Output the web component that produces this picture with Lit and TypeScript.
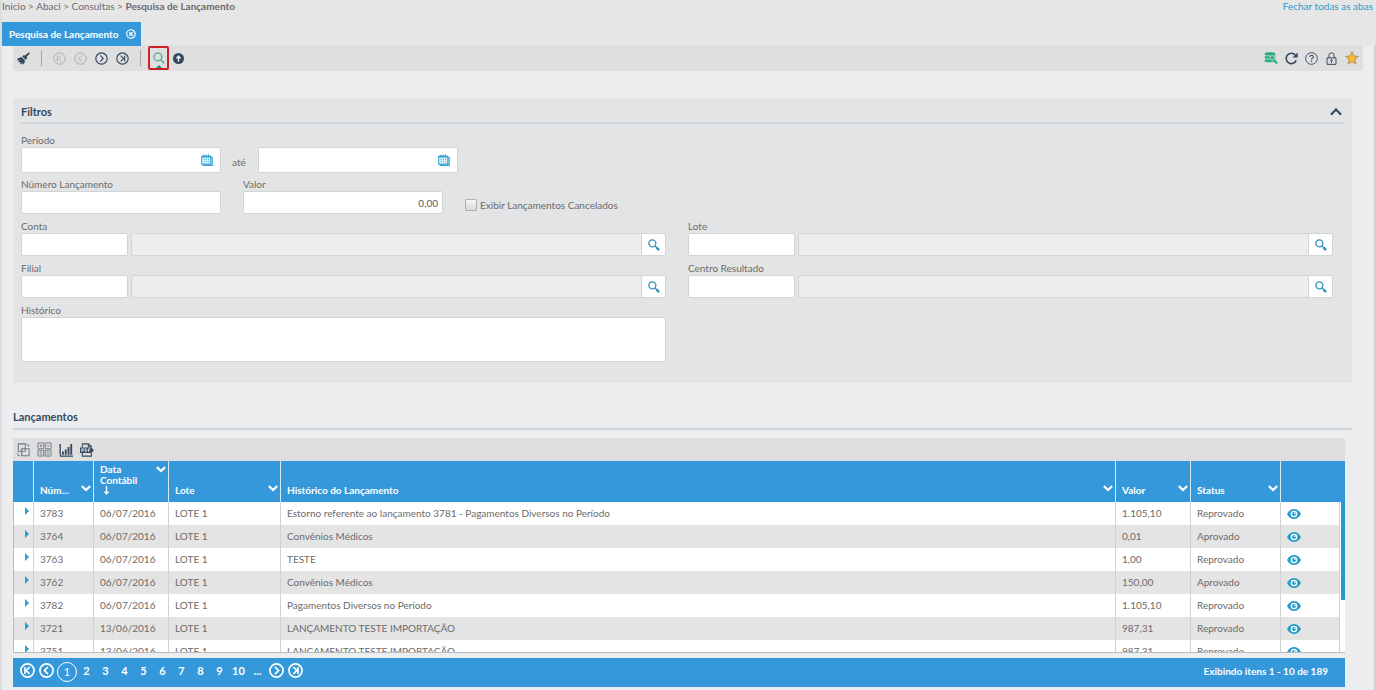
import { LitElement, html, css, svg } from "lit";
import { customElement, state } from "lit/decorators.js";
import { classMap } from "lit/directives/class-map.js";

type Row = [string, string, string, string, string];

const ROWS: Row[] = [
  ["3783", "06/07/2016", "Estorno referente ao lançamento 3781 - Pagamentos Diversos no Período", "1.105,10", "Reprovado"],
  ["3764", "06/07/2016", "Convênios Médicos", "0,01", "Aprovado"],
  ["3763", "06/07/2016", "TESTE", "1,00", "Reprovado"],
  ["3762", "06/07/2016", "Convênios Médicos", "150,00", "Aprovado"],
  ["3782", "06/07/2016", "Pagamentos Diversos no Período", "1.105,10", "Reprovado"],
  ["3721", "13/06/2016", "LANÇAMENTO TESTE IMPORTAÇÃO", "987,31", "Reprovado"],
  ["3751", "13/06/2016", "LANÇAMENTO TESTE IMPORTAÇÃO", "987,31", "Reprovado"],
];

const line = (size: number, width: number, body: unknown, box = 16) => html`<svg
  width=${size} height=${size} viewBox="0 0 ${box} ${box}" fill="none"
  stroke="currentColor" stroke-width=${width} aria-hidden="true">${body}</svg>`;

const first = svg`<circle cx="8" cy="8" r="7"/><path d="M5.3 4.4v7.2M10.2 4.4 6.6 8l3.6 3.6"/>`;
const prev = svg`<circle cx="8" cy="8" r="7"/><path d="M9.6 4.2 5.8 8l3.8 3.8"/>`;
const next = svg`<circle cx="8" cy="8" r="7"/><path d="M6.4 4.2 10.2 8l-3.8 3.8"/>`;
const last = svg`<circle cx="8" cy="8" r="7"/><path d="M10.7 4.4v7.2M5.8 4.4 9.4 8l-3.6 3.6"/>`;

const closeIcon = line(10, 1.8, svg`<circle cx="8" cy="8" r="6.8"/><path d="m5.2 5.2 5.6 5.6m0-5.6-5.6 5.6" stroke-width="2.2"/>`);
const broomIcon = line(13, 1, svg`<path fill="currentColor" stroke="none" d="M14.6.4 16 1.6l-4.3 4.6.9 1.4-2 1.9-4.2-4 2-1.9 1.4.8zM5.6 6.2l4.3 4.2-1 3.6-2.2 1.6.1-2.5-1.6 1.6-1.7-.5 1.4-2.5-2.3 1.3L1.2 11l2.6-1.4L.4 10 .2 8.2z"/>`);
const searchIcon = line(12, 1.5, svg`<circle cx="6.6" cy="6.6" r="5.2"/><path d="m10.6 10.6 4.4 4.4"/>`);
const upIcon = line(11, 2, svg`<circle cx="8" cy="8" r="8" fill="currentColor" stroke="none"/><path stroke="#fff" d="M8 12.4V5M4.8 7.8 8 4.6l3.2 3.2"/>`);
const dbIcon = line(14, 1, svg`<path fill="currentColor" stroke="none" d="M1 2.200C3 1 11 1 13 2.200v8l2.800 3.200-1.400 1.600-3.200-2.600C8 13.200 3 13.200 1 12.200z"/><path stroke="#dfdfdf" stroke-width=".9" d="M1 4.900c2.500 1 4.500.9 6.500.4M1 8.600c1.500.7 3 .9 5 .8M11.500 4.700l1.500-.4"/><circle cx="9.400" cy="7.900" r="2.600" stroke="#dfdfdf" stroke-width=".9"/>`);
const reloadIcon = line(13, 1.9, svg`<path d="M13.800 10.300A6.400 6.400 0 1 1 12.800 3.800"/><path fill="currentColor" stroke="none" d="M15.600.6v6.200H9.400z"/>`);
const helpIcon = line(13, 1.1, svg`<circle cx="8" cy="8" r="7.200"/><path stroke-width="1.300" d="M5.900 6.300C5.900 3.300 10.300 3.400 10.200 6.100 10.100 7.600 8 7.800 8 9.600M8 10.900v1.500"/>`);
const lockIcon = line(13, 1.2, svg`<path d="M2.500 7.200h11v8h-11zM4.800 7V4.200a3.200 3.200 0 0 1 6.400 0V7"/><circle cx="8" cy="10.300" r="1"/><path d="M8 11v2.400"/>`);
const starIcon = line(14, 1, svg`<path fill="#f7b736" stroke="#a8905c" d="m8 .9 2.100 4.800 5.200.5-3.900 3.500 1.100 5.200L8 12.200l-4.500 2.700 1.100-5.200L.7 6.200l5.200-.5z"/>`);
const calendarIcon = line(12, 1.4, svg`<path fill="#c9ecf8" d="M3 4.600h12v10.600H3z"/><path fill="#eefaff" d="M1 3h12v10.500H1z"/><path stroke-width="2.200" d="M1 3.600h12"/><path d="M4 .6v3M7 .6v3M10 .6v3"/><path stroke-width="1.200" stroke-dasharray="2 1" d="M4.200 6v5M7 6v5M9.800 6v5"/>`);
const lensIcon = line(12, 1.700, svg`<circle cx="5.800" cy="5.800" r="4.700"/><path d="m9.200 9.200 2 2"/><path stroke-width="3" d="m11 11 3.800 3.800"/>`);
const collapseIcon = line(12, 2.800, svg`<path d="m1.200 11.800 6.800-7 6.800 7"/>`);
const chevronIcon = line(10, 3.400, svg`<path d="m1.400 5 6.600 6.200L14.600 5"/>`);
const sortIcon = line(9, 2.600, svg`<path d="M8 0v13M4.400 10 8 14l3.600-4"/>`);
const eyeIcon = html`<svg width="14" height="10" viewBox="0 0 14 10" aria-hidden="true"><path fill="currentColor" d="M0 5C3.300-1.600 10.700-1.600 14 5 10.700 11.600 3.300 11.600 0 5z"/><circle cx="7" cy="5" r="3.300" fill="#fff"/><circle cx="7" cy="5" r="2" fill="currentColor"/><circle cx="7.800" cy="4.200" r=".8" fill="#fff"/></svg>`;
const groupIcon = line(14, 1.2, svg`<path d="M2.600 1h8v8.500h-8zM6.500 6.500H15v8H6.500z"/><path stroke-dasharray="2 1.400" d="M12 1.600h2.600v3M2 11v3.400h3"/>`);
const columnsIcon = line(15, 1, svg`<path d="M1 1h6.200v6.200H1zM8.800 1H15v6.200H8.800zM1 8.800h6.200V15H1zM8.800 8.800H15V15H8.800zM2.800 4.100h2.600M4.100 2.800v2.600M10.600 4.100h2.600M2.800 10.900h2.600M2.800 13h2.600M10.600 10.900h2.600M10.600 13h2.600"/>`);
const chartIcon = line(14, 1.200, svg`<path d="M1.500 1v14H16M0 2.500h1.500M0 5.500h1.500M0 8.500h1.500M0 11.500h1.500"/><path stroke-width="2.100" d="M4.500 13.500V9.800M7.700 13.500V7.300M10.900 13.500V4.500M14 13.500V1"/>`);
const pdfIcon = html`<svg width="14" height="14" viewBox="0 0 16 16" fill="none" stroke="currentColor" stroke-width="1.200" aria-hidden="true"><path d="M2.600 5V1h7l3.400 3v1M2.600 11.500V15h10.400v-3.500M9.500 1v3.300H13"/><path fill="currentColor" stroke="none" d="M0 5h13l3 3.200-3 3.300H0z"/><path stroke="#dfdfdf" stroke-width="1" d="M2 10.300V6.600h1.800v1.900H2M5.700 6.600v3.200h1.200l.8-.8V7.300l-.7-.7zM9.600 10.300V6.600h2.200M9.600 8.300h1.800"/></svg>`;

@customElement("app-root")
export class AppRoot extends LitElement {
  @state() private open = true;
  @state() private page = 1;

  static styles = css`
    :host {
      display: block;
      min-height: 100vh;
      box-sizing: border-box;
      background: #e6e6e6;
      border-left: 2px solid #dcdddd;
      color: #6b6b6b;
      font: 10px/12px Lato, "Open Sans", sans-serif;
    }
    * { box-sizing: border-box; }
    svg { display: block; flex: none; }
    button {
      display: inline-flex;
      align-items: center;
      justify-content: center;
      padding: 0;
      border: 0;
      background: none;
      color: inherit;
      font: inherit;
      cursor: pointer;
    }
    .top {
      display: flex;
      justify-content: space-between;
      height: 22px;
      padding-right: 3px;
    }
    .crumbs a { color: inherit; text-decoration: none; }
    .close-all { color: #2d9bcb; text-decoration: none; }
    .tabs { display: flex; height: 23px; }
    .tab {
      display: flex;
      align-items: center;
      gap: 8px;
      height: 24px;
      padding: 0 5px 0 7px;
      background: #3498db;
      color: #fff;
      font-weight: 700;
      z-index: 1;
    }
    .page {
      min-height: calc(100vh - 45px);
      padding: 0 11px 3px;
      background: #ecedee;
      border-right: 2px solid #cfd0d0;
    }
    .toolbar {
      display: flex;
      align-items: center;
      gap: 8px;
      height: 26px;
      padding: 0 4px;
      background: #dfdfdf;
      color: #34495e;
    }
    .toolbar button:disabled { color: #a8adb2; cursor: default; }
    .sep { width: 1px; height: 16px; margin: 0 3px; background: #a4a6a8; }
    .found {
      position: relative;
      width: 21px;
      height: 24px;
      margin: 0 -4px;
      border: 2px solid #cc2127;
      border-radius: 2px;
      color: #35a37f;
    }
    .found::after {
      content: "";
      position: absolute;
      bottom: 0;
      border: 3px solid transparent;
      border-top: 0;
      border-bottom-color: #2b8d70;
    }
    .tools { display: flex; align-items: center; gap: 7px; margin-left: auto; }
    .green { color: #27ae85; }
    .panel {
      margin: 27px 11px 0 0;
      padding: 5px 8px 0;
      background: #e3e4e5;
    }
    .panel.open { padding-bottom: 21px; }
    .head {
      display: flex;
      align-items: center;
      justify-content: space-between;
      height: 21px;
      padding-bottom: 2px;
      border-bottom: 2px solid #d2d6d9;
    }
    h2 {
      margin: 0;
      color: #34495e;
      font-size: 11px;
      line-height: 16px;
      font-weight: 700;
    }
    .head button { color: #34495e; width: 16px; height: 16px; }
    .fields { padding: 10px 11px 0 0; }
    .line { display: flex; align-items: flex-end; }
    .field { display: flex; flex-direction: column; }
    .field > label { height: 13px; }
    .narrow { width: 200px; }
    input[type="text"], textarea {
      display: block;
      width: 100%;
      height: 23px;
      margin: 0;
      padding: 0 4px;
      border: 1px solid #d2d4d6;
      border-radius: 2px;
      background: #fff;
      color: #5c5c5c;
      font: 10px/14px Lato, "Open Sans", sans-serif;
      outline: 0;
    }
    input[readonly] { background: #ededed; border-radius: 2px 0 0 2px; }
    textarea { height: 45px; resize: none; }
    .date { position: relative; width: 200px; }
    .date input[type="text"] { height: 26px; padding-right: 24px; }
    .date button {
      position: absolute;
      top: 6px;
      right: 7px;
      width: 14px;
      height: 14px;
      color: #2ba0d2;
    }
    .until { width: 37px; padding: 0 0 5px 11px; }
    .second { margin-top: 5px; gap: 22px; }
    .right { text-align: right; }
    .check { display: flex; align-items: center; gap: 3px; height: 18px; }
    .check input {
      appearance: none;
      width: 12px;
      height: 12px;
      margin: 0;
      border: 1px solid #adb0b2;
      border-radius: 1px;
      background: linear-gradient(#f4f4f4, #d9dadb);
    }
    .check input:checked { background: #3498db; }
    .lookups {
      display: grid;
      grid-template-columns: 1fr 1fr;
      gap: 6px 22px;
      margin-top: 6px;
    }
    .lookup { display: flex; }
    .lookup .code { width: 107px; margin-right: 3px; flex: none; }
    .lookup .desc { flex: 1; min-width: 0; }
    .lookup button {
      width: 25px;
      height: 23px;
      margin-left: -1px;
      border: 1px solid #d2d4d6;
      border-radius: 0 2px 2px 0;
      background: #fff;
      color: #2b93b8;
      flex: none;
    }
    .section {
      margin: 26px 11px 8px 0;
      padding-bottom: 3px;
      border-bottom: 2px solid #d0d3d6;
    }
    .grid { margin-right: 18px; }
    .gridbar {
      display: flex;
      align-items: center;
      gap: 7px;
      height: 23px;
      padding: 0 3px;
      background: #dfdfdf;
      color: #34495e;
    }
    .soft { color: #6d7b88; }
    .frame { position: relative; }
    .scroll {
      height: 192px;
      overflow-y: auto;
      scrollbar-width: none;
      border-bottom: 1px solid #b9bcbe;
      background: #fff;
    }
    .thumb {
      position: absolute;
      top: 41px;
      right: 0;
      width: 4px;
      height: 98px;
      background: #209fc4;
    }
    table {
      width: 100%;
      table-layout: fixed;
      border-collapse: separate;
      border-spacing: 0;
    }
    .c20 { width: 21px; }
    .c60 { width: 60px; }
    .c75 { width: 75px; }
    .c112 { width: 112px; }
    .c90 { width: 90px; }
    .c59 { width: 59px; }
    .c5 { width: 5px; }
    th {
      position: sticky;
      top: 0;
      z-index: 1;
      height: 41px;
      padding: 3px 2px 6px 6px;
      background: #3498db;
      border-right: 1px solid #d6eaf8;
      color: #fff;
      font-weight: 700;
      line-height: 11px;
      text-align: left;
      vertical-align: bottom;
    }
    th:last-child { border-right: 0; }
    .cap { display: flex; align-items: flex-end; justify-content: space-between; }
    .cap button { padding-bottom: 3px; }
    .cap.tall { align-items: flex-start; }
    .cap.tall button { padding: 0; }
    .sort { padding-left: 2px; height: 10px; }
    td {
      height: 23px;
      padding: 0 6px 1px;
      border-right: 1px solid #cfd1d2;
      white-space: nowrap;
      overflow: hidden;
      text-overflow: ellipsis;
    }
    td:first-child { padding: 0 0 5px 11px; border-left: 1px solid #b9bcbe; text-overflow: clip; }
    td:last-child { padding: 0; border-right: 0; background: #fff; }
    tr:nth-child(even) td:not(:last-child) { background: #e4e4e4; }
    .expand { width: 4px; height: 8px; }
    .expand::before {
      content: "";
      border: 4px solid transparent;
      border-left-color: #2b9fd0;
      border-right: 0;
    }
    .view { color: #249fcb; vertical-align: middle; }
    .pager {
      display: flex;
      align-items: center;
      justify-content: space-between;
      height: 29px;
      margin-top: 5px;
      padding: 0 17px 4px 5px;
      background: #3498db;
      color: #fff;
      font-weight: 700;
    }
    .pages { display: flex; align-items: center; }
    .pages button { width: 19px; height: 20px; font-size: 11px; }
    .pages .current {
      width: 20px;
      border: 1px solid #fff;
      border-radius: 50%;
      font-weight: 400;
      margin: 2px 0 0 1px;
    }
  `;

  private lookup(id: string, label: string) {
    return html`<div class="field">
      <label for=${id}>${label}</label>
      <div class="lookup">
        <div class="code"><input id=${id} type="text" /></div>
        <div class="desc"><input type="text" readonly aria-label="Descrição ${label}" /></div>
        <button aria-label="Pesquisar ${label}">${lensIcon}</button>
      </div>
    </div>`;
  }

  private date(id: string, label: string) {
    return html`<div class="date">
      <input id=${id} type="text" aria-label=${label} />
      <button aria-label="Abrir calendário">${calendarIcon}</button>
    </div>`;
  }

  private head(text: string) {
    return html`<th><div class="cap"><span>${text}</span><button aria-label="Menu ${text}">${chevronIcon}</button></div></th>`;
  }

  render() {
    return html`
      <header class="top">
        <nav class="crumbs"><a href="#">Início</a> &gt; <a href="#">Abaci</a> &gt; <a href="#">Consultas</a> &gt; <b>Pesquisa de Lançamento</b></nav>
        <a class="close-all" href="#">Fechar todas as abas</a>
      </header>
      <div class="tabs">
        <div class="tab">Pesquisa de Lançamento<button aria-label="Fechar aba">${closeIcon}</button></div>
      </div>
      <main class="page">
        <div class="toolbar">
          <button aria-label="Limpar">${broomIcon}</button>
          <span class="sep"></span>
          <button disabled aria-label="Primeiro">${line(13, 1.2, first)}</button>
          <button disabled aria-label="Anterior">${line(13, 1.2, prev)}</button>
          <button aria-label="Próximo">${line(13, 1.4, next)}</button>
          <button aria-label="Último">${line(13, 1.4, last)}</button>
          <span class="sep"></span>
          <button class="found" aria-label="Pesquisar">${searchIcon}</button>
          <button aria-label="Subir">${upIcon}</button>
          <div class="tools">
            <button class="green" aria-label="Consultar dados">${dbIcon}</button>
            <button aria-label="Atualizar">${reloadIcon}</button>
            <button aria-label="Ajuda">${helpIcon}</button>
            <button aria-label="Bloquear">${lockIcon}</button>
            <button aria-label="Favorito">${starIcon}</button>
          </div>
        </div>

        <section class=${classMap({ panel: true, open: this.open })}>
          <div class="head">
            <h2>Filtros</h2>
            <button aria-label="Recolher filtros" @click=${() => (this.open = !this.open)}>${collapseIcon}</button>
          </div>
          ${this.open
            ? html`<div class="fields">
                <div class="line">
                  <div class="field"><label for="from">Período</label>${this.date("from", "Período inicial")}</div>
                  <span class="until">até</span>
                  ${this.date("to", "Período final")}
                </div>
                <div class="line second">
                  <div class="field narrow"><label for="num">Número Lançamento</label><input id="num" type="text" /></div>
                  <div class="field narrow"><label for="val">Valor</label><input id="val" class="right" type="text" value="0,00" /></div>
                  <label class="check"><input type="checkbox" />Exibir Lançamentos Cancelados</label>
                </div>
                <div class="lookups">
                  ${this.lookup("conta", "Conta")} ${this.lookup("lote", "Lote")}
                  ${this.lookup("filial", "Filial")} ${this.lookup("centro", "Centro Resultado")}
                  <div class="field"><label for="hist">Histórico</label><textarea id="hist"></textarea></div>
                </div>
              </div>`
            : null}
        </section>

        <div class="section"><h2>Lançamentos</h2></div>
        <section class="grid">
          <div class="gridbar">
            <button class="soft" aria-label="Agrupar">${groupIcon}</button>
            <button class="soft" aria-label="Colunas">${columnsIcon}</button>
            <button aria-label="Gráfico">${chartIcon}</button>
            <button aria-label="Exportar PDF">${pdfIcon}</button>
          </div>
          <div class="frame">
            <div class="scroll">
              <table>
                <colgroup>
                  <col class="c20" /><col class="c60" /><col class="c75" /><col class="c112" /><col />
                  <col class="c75" /><col class="c90" /><col class="c59" /><col class="c5" />
                </colgroup>
                <thead>
                  <tr>
                    <th></th>
                    ${this.head("Núm...")}
                    <th>
                      <div class="cap tall"><span>Data<br />Contábil</span><button aria-label="Menu Data Contábil">${chevronIcon}</button></div>
                      <div class="sort">${sortIcon}</div>
                    </th>
                    ${this.head("Lote")} ${this.head("Histórico do Lançamento")}
                    ${this.head("Valor")} ${this.head("Status")}
                    <th colspan="2"></th>
                  </tr>
                </thead>
                <tbody>
                  ${ROWS.map(
                    ([num, date, text, value, status]) => html`<tr>
                      <td><button class="expand" aria-label="Expandir ${num}"></button></td>
                      <td>${num}</td><td>${date}</td><td>LOTE 1</td><td>${text}</td>
                      <td>${value}</td><td>${status}</td>
                      <td><button class="view" aria-label="Visualizar ${num}">${eyeIcon}</button></td>
                      <td></td>
                    </tr>`
                  )}
                </tbody>
              </table>
            </div>
            <div class="thumb"></div>
          </div>
          <footer class="pager">
            <div class="pages">
              <button aria-label="Primeira página">${line(15, 1.8, first)}</button>
              <button aria-label="Página anterior">${line(15, 1.8, prev)}</button>
              ${[1, 2, 3, 4, 5, 6, 7, 8, 9, 10].map(
                (n) => html`<button class=${classMap({ current: n === this.page })} @click=${() => (this.page = n)}>${n}</button>`
              )}
              <button aria-label="Mais páginas">...</button>
              <button aria-label="Próxima página">${line(15, 1.8, next)}</button>
              <button aria-label="Última página">${line(15, 1.8, last)}</button>
            </div>
            <span>Exibindo itens 1 - 10 de 189</span>
          </footer>
        </section>
      </main>
    `;
  }
}
